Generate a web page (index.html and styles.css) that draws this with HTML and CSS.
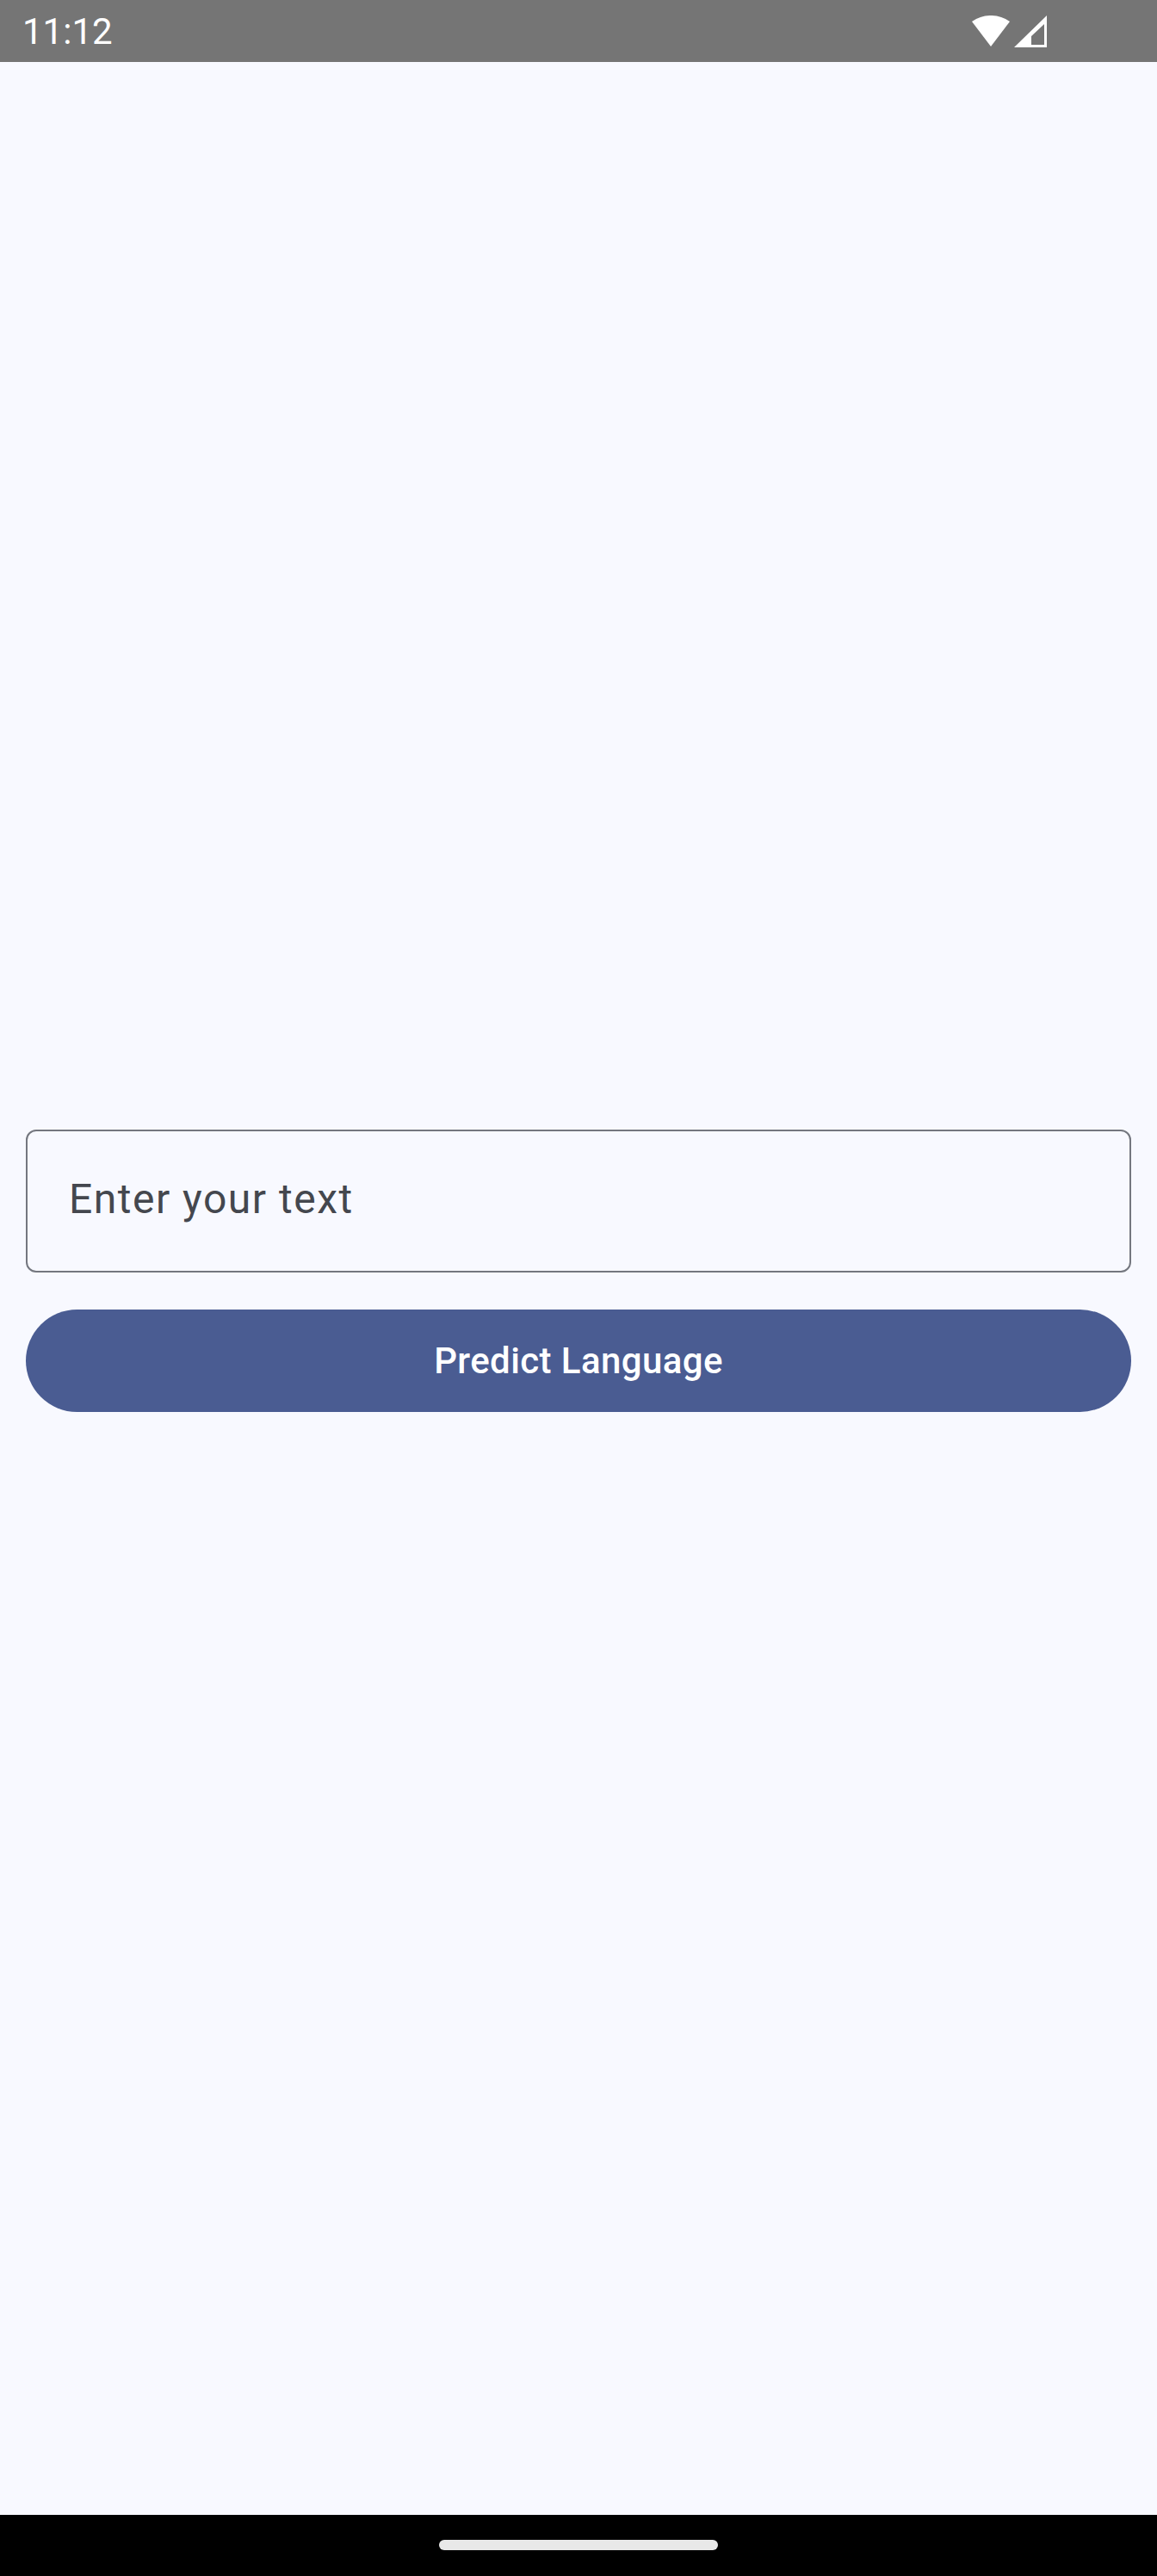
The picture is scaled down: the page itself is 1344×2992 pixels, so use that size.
FILE: index.html
```html
<!DOCTYPE html>
<html>
<head>
<meta charset="utf-8">
<link rel="stylesheet" href="styles.css">
</head>
<body>
<div class="screen">
  <div class="status-bar">
    <span class="time">11:12</span>
    <div class="status-icons">
      <svg class="wifi" width="44" height="37" viewBox="0 0 44 37"><path d="M22 36 L0 7 A38 38 0 0 1 44 7 Z" fill="#fff"/></svg>
      <svg class="signal" width="38" height="37" viewBox="0 0 38 37"><path fill-rule="evenodd" d="M0 37 L38 37 L38 0 Z M20 34 L35 34 L35 10 L20 24 Z" fill="#fff"/></svg>
    </div>
  </div>
  <main class="content">
    <div class="form">
      <div class="text-field"><span class="placeholder">Enter your text</span></div>
      <button class="predict-btn">Predict Language</button>
      <div class="result"></div>
    </div>
  </main>
  <div class="nav-bar"><div class="handle"></div></div>
</div>
</body>
</html>
```
FILE: styles.css
```css
* { box-sizing: border-box; }
html, body { margin: 0; padding: 0; }
body {
  width: 1344px;
  height: 2992px;
  background: #f8f9ff;
  font-family: Roboto, "Noto Sans", sans-serif;
}
.screen {
  display: flex;
  flex-direction: column;
  height: 2992px;
}
.status-bar {
  height: 72px;
  background: #757575;
  display: flex;
  align-items: center;
  justify-content: space-between;
  padding: 0 128px 0 26px;
  flex-shrink: 0;
}
.time {
  color: #fff;
  font-size: 42px;
  line-height: 1;
  padding-top: 2px;
}
.status-icons {
  display: flex;
  align-items: flex-start;
  gap: 5px;
  padding-top: 1px;
}
.status-icons svg { display: block; }
.content {
  flex: 1;
  display: flex;
  flex-direction: column;
  justify-content: center;
  padding: 0 30px;
}
.form {
  display: flex;
  flex-direction: column;
}
.text-field {
  height: 166px;
  border: 2px solid #74777f;
  border-radius: 12px;
  display: flex;
  align-items: center;
  padding-left: 48px;
}
.placeholder {
  font-size: 48px;
  letter-spacing: 1.5px;
  color: #44474e;
  line-height: 1;
  padding-bottom: 4px;
}
.predict-btn {
  margin-top: 43px;
  height: 119px;
  border: none;
  border-radius: 60px;
  background: #4a5c92;
  color: #fff;
  font-family: Roboto, "Noto Sans", sans-serif;
  font-size: 42px;
  font-weight: 500;
  letter-spacing: 0.4px;
  padding: 0;
}
.result {
  height: 0;
  margin-top: 42px;
}
.nav-bar {
  height: 71px;
  background: #000;
  display: flex;
  justify-content: center;
  padding-top: 29px;
  flex-shrink: 0;
}
.handle {
  width: 324px;
  height: 12px;
  border-radius: 6px;
  background: #e8e8e8;
}
```
